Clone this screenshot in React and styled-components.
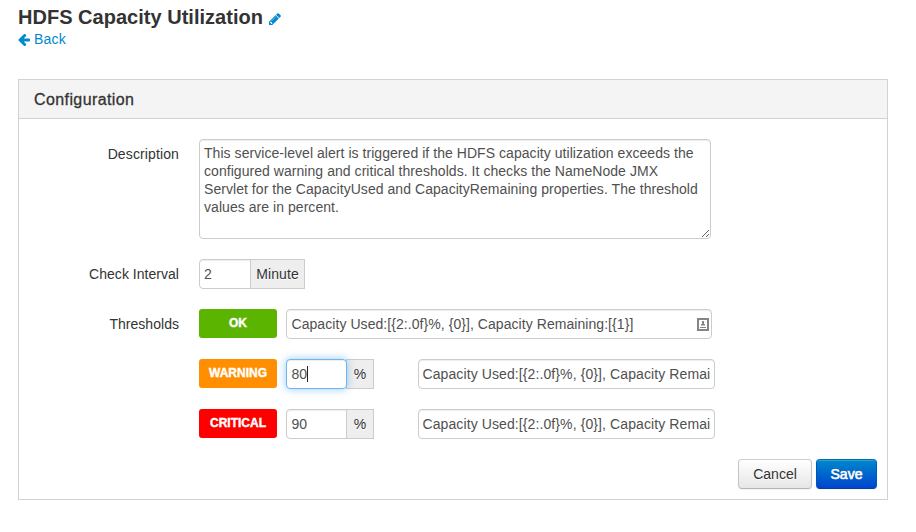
import React from 'react';
import styled, { createGlobalStyle, css } from 'styled-components';

const GlobalStyle = createGlobalStyle`
  * { box-sizing: border-box; }
  body {
    margin: 0;
    background: #fff;
    color: #333;
    font: 14px/20px "Liberation Sans", Arial, sans-serif;
  }
`;

const Page = styled.main`
  width: 916px;
  height: 532px;
  padding: 6px 28px 0 18px;
  overflow: hidden;
`;

const Title = styled.h1`
  display: flex;
  align-items: center;
  gap: 6px;
  height: 22px;
  margin: 0;
  font-size: 20px;
  line-height: 22px;
  font-weight: bold;
  white-space: nowrap;
`;

const TitleText = styled.span`
  letter-spacing: 0.02px;
`;

const PencilIcon = styled.svg`
  width: 12px;
  height: 12px;
  margin-top: 4px;
  fill: #0088cc;
`;

const BackLink = styled.a`
  display: flex;
  align-items: center;
  gap: 4px;
  width: max-content;
  height: 20px;
  margin-top: 1px;
  color: #0088cc;
  letter-spacing: 0.2px;
`;

const ArrowIcon = styled.svg`
  width: 12px;
  height: 12px;
  margin-top: 1px;
  fill: #0088cc;
`;

const Panel = styled.section`
  height: 421px;
  margin-top: 30px;
  border: 1px solid #d2d2d2;
`;

const PanelHeader = styled.header`
  height: 39px;
  padding: 0 15px;
  border-bottom: 1px solid #d2d2d2;
  background: #f4f4f4;
  font-size: 16px;
  line-height: 39px;
  letter-spacing: 0.4px;
  -webkit-text-stroke: 0.3px #333;
`;

const Form = styled.form`
  padding: 20px 10px 0 0;
`;

const Row = styled.div`
  display: flex;
  height: ${(p) => p.$height || 30}px;
  margin-bottom: 20px;
`;

const Label = styled.label`
  width: 160px;
  margin-right: 20px;
  padding-top: 5px;
  text-align: right;
  letter-spacing: ${(p) => p.$tracking || 0.03}px;
`;

const fieldStyle = css`
  border: 1px solid #ccc;
  border-radius: 4px;
  background: #fff;
  box-shadow: inset 0 1px 1px rgba(0, 0, 0, 0.075);
  color: #505050;
  font: 14px/20px "Liberation Sans", Arial, sans-serif;
  letter-spacing: 0.05px;
  outline: none;
`;

const Description = styled.textarea`
  ${fieldStyle}
  display: block;
  width: 512px;
  height: 100px;
  padding: 4px;
  line-height: 18px;
  overflow: hidden;
`;

const Input = styled.input`
  ${fieldStyle}
  width: ${(p) => p.$width}px;
  height: 30px;
  padding: 4px;
  padding-left: ${(p) => p.$inset || 4}px;
  ${(p) => p.$joined && css`border-radius: 4px 0 0 4px;`}
`;

const MessageInput = styled(Input)`
  padding-left: 3.5px;
  letter-spacing: 0.1px;
`;

const FocusedField = styled.div`
  ${fieldStyle}
  display: flex;
  align-items: center;
  z-index: 1;
  width: 61px;
  height: 30px;
  padding: 0 4.5px;
  border-color: #6fb5f0;
  box-shadow: inset 0 1px 1px rgba(0, 0, 0, 0.075), 0 0 8px rgba(82, 168, 236, 0.6);
`;

const Caret = styled.span`
  width: 1px;
  height: 16px;
  background: #222;
`;

const AddOn = styled.span`
  height: 30px;
  width: ${(p) => p.$width}px;
  margin-left: -1px;
  border: 1px solid #ccc;
  background: #eee;
  line-height: 28px;
  text-align: center;
  letter-spacing: 0.1px;
  text-shadow: 0 1px 0 #fff;
`;

const Badge = styled.span`
  width: 78px;
  height: 29px;
  margin-right: 9px;
  border-radius: 3px;
  background: ${(p) => p.$color};
  color: #fff;
  font-size: 12px;
  font-weight: bold;
  line-height: 28px;
  text-align: center;
  -webkit-text-stroke: 0.4px #fff;
`;

const FieldWithIcon = styled.label`
  ${fieldStyle}
  display: flex;
  align-items: center;
  justify-content: space-between;
  width: 426px;
  height: 30px;
  padding: 0 2px 0 4.5px;
  letter-spacing: 0.06px;
`;

const ContactIcon = styled.svg`
  width: 12px;
  height: 13px;
`;

const MessageSlot = styled.div`
  margin-left: 44px;
`;

const Actions = styled.div`
  display: flex;
  justify-content: flex-end;
  gap: 4px;
`;

const Button = styled.button`
  width: ${(p) => (p.$primary ? 61 : 74)}px;
  height: 30px;
  padding: 0;
  border: 1px solid;
  border-radius: 4px;
  font: 14px/20px "Liberation Sans", Arial, sans-serif;
  ${(p) =>
    p.$primary
      ? css`
          border-color: #006ab5 #0055bb #003f9f;
          background: linear-gradient(#0088cc, #0044cc);
          color: #fff;
          text-shadow: 0 -1px 0 rgba(0, 0, 0, 0.25);
          -webkit-text-stroke: 0.6px #fff;
        `
      : css`
          border-color: #ccc #c4c4c4 #b3b3b3;
          background: linear-gradient(#fff, #e6e6e6);
          color: #333;
          text-shadow: 0 1px 1px rgba(255, 255, 255, 0.75);
        `}
  box-shadow: inset 0 1px 0 rgba(255, 255, 255, 0.2), 0 1px 2px rgba(0, 0, 0, 0.05);
`;

const message = 'Capacity Used:[{2:.0f}%, {0}], Capacity Remaining:[{1}]';
const description =
  'This service-level alert is triggered if the HDFS capacity utilization exceeds the\nconfigured warning and critical thresholds. It checks the NameNode JMX\nServlet for the CapacityUsed and CapacityRemaining properties. The threshold\nvalues are in percent.';

export default function App() {
  return (
    <Page>
      <GlobalStyle />
      <Title>
        <TitleText>HDFS Capacity Utilization</TitleText>
        <PencilIcon viewBox="128 128 1536 1536">
          <path d="M491 1536l91-91-235-235-91 91v107h128v128h107zm523-928q0-22-22-22-10 0-17 7l-542 542q-7 7-7 17 0 22 22 22 10 0 17-7l542-542q7-7 7-17zm-54-192l416 416-832 832h-416v-416zm683 96q0 53-37 90l-166 166-416-416 166-165q36-38 90-38 53 0 91 38l235 234q37 39 37 91z" />
        </PencilIcon>
      </Title>
      <BackLink>
        <ArrowIcon viewBox="128 192 1536 1536">
          <path d="M1664 896v128q0 53-32.5 90.5t-84.5 37.5h-704l293 294q38 36 38 90t-38 90l-75 76q-37 37-90 37-52 0-91-37l-651-652q-37-37-37-90 0-52 37-91l651-650q38-38 91-38 52 0 90 38l75 74q38 38 38 91t-38 91l-293 293h704q52 0 84.5 37.5t32.5 90.5z" />
        </ArrowIcon>
        Back
      </BackLink>
      <Panel>
        <PanelHeader>Configuration</PanelHeader>
        <Form>
          <Row $height={100}>
            <Label $tracking={0.12}>Description</Label>
            <Description defaultValue={description} spellCheck={false} />
          </Row>
          <Row>
            <Label>Check Interval</Label>
            <Input $width={52} $joined defaultValue="2" />
            <AddOn $width={55}>Minute</AddOn>
          </Row>
          <Row>
            <Label>Thresholds</Label>
            <Badge $color="#5ab400">OK</Badge>
            <FieldWithIcon>
              {message}
              <ContactIcon viewBox="0 0 12 13">
                <rect x="1" y="1" width="10" height="11" fill="#fff" stroke="#858585" strokeWidth="2" />
                <rect x="5" y="3" width="2" height="3" fill="#858585" />
                <path d="M4 6h4v1.5h-4zM3 9h6v1h-6z" fill="#858585" />
              </ContactIcon>
            </FieldWithIcon>
          </Row>
          <Row>
            <Label />
            <Badge $color="#ff8e00">WARNING</Badge>
            <FocusedField>
              80
              <Caret />
            </FocusedField>
            <AddOn $width={28}>%</AddOn>
            <MessageSlot>
              <MessageInput $width={297} defaultValue={message} />
            </MessageSlot>
          </Row>
          <Row>
            <Label />
            <Badge $color="#ff0000">CRITICAL</Badge>
            <Input $width={61} $inset={4.5} $joined defaultValue="90" />
            <AddOn $width={28}>%</AddOn>
            <MessageSlot>
              <MessageInput $width={297} defaultValue={message} />
            </MessageSlot>
          </Row>
          <Actions>
            <Button type="button">Cancel</Button>
            <Button type="button" $primary>Save</Button>
          </Actions>
        </Form>
      </Panel>
    </Page>
  );
}
